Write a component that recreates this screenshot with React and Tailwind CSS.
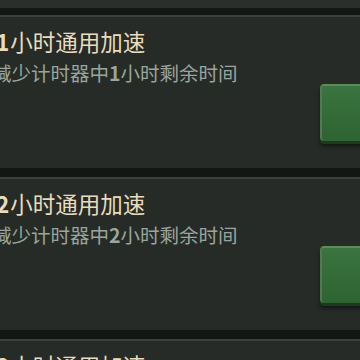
import React from "react";

const items = [
  { n: "1" },
  { n: "2" },
  { n: "3" },
];

function Card({ n }) {
  return (
    <div className="h-[153px] shrink-0 border-t-2 border-[#3a413d] bg-[#262b28] flex">
      <div className="flex-1 pt-[9px] ml-[-4px]">
        <div className="text-[22.5px] leading-[30px] text-[#e8dcbc] whitespace-nowrap">
          <span className="font-bold">{n}</span>
          <span className="ml-[1px]">小时通用加速</span>
        </div>
        <div className="mt-[5px] ml-[-4px] text-[19.5px] leading-[24px] text-[#9aa59c] whitespace-nowrap">
          减少计时器中<span className="font-bold">{n}</span>小时剩余时间
        </div>
      </div>
      <div className="w-[40px] shrink-0 pt-[67px]">
        <div className="w-[80px] h-[57px] rounded-[4px] bg-gradient-to-b from-[#3b7440] to-[#2e6332] border-t-2 border-l-2 border-t-[#5b8c5a] border-l-[#4c7d4c] shadow-[0_3px_0_#1c3b1e,0_5px_4px_rgba(0,0,0,0.55)]" />
      </div>
    </div>
  );
}

export default function App() {
  return (
    <div
      className="w-[360px] h-[360px] overflow-hidden bg-[#262b28] flex flex-col"
      style={{ fontFamily: '"Noto Sans CJK SC", "Noto Sans", sans-serif' }}
    >
      <div className="h-[8px] shrink-0 bg-[#2a2f2c]" />
      <div className="h-[7px] shrink-0 bg-[#121715]" />
      {items.map((it, i) => (
        <React.Fragment key={i}>
          <Card n={it.n} />
          <div className="h-[9px] shrink-0 bg-[#121715]" />
        </React.Fragment>
      ))}
    </div>
  );
}
